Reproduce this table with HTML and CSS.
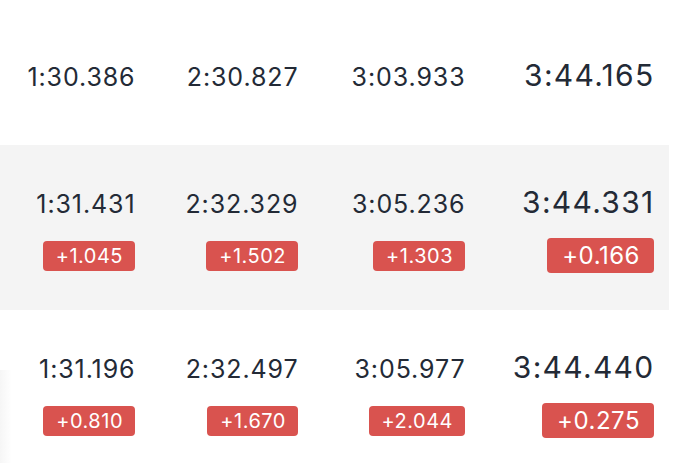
FILE: index.html
```html
<!DOCTYPE html>
<html>
<head>
<meta charset="utf-8">
<link rel="stylesheet" href="styles.css">
</head>
<body>
<div class="table">
  <div class="row row-first">
    <div class="time">1:30.386</div>
    <div class="time">2:30.827</div>
    <div class="time">3:03.933</div>
    <div class="time total">3:44.165</div>
  </div>
  <div class="row row-alt">
    <div class="time">1:31.431</div>
    <div class="time">2:32.329</div>
    <div class="time">3:05.236</div>
    <div class="time total">3:44.331</div>
    <div class="gap">+1.045</div>
    <div class="gap">+1.502</div>
    <div class="gap">+1.303</div>
    <div class="gap gap-total">+0.166</div>
  </div>
  <div class="row row-last">
    <div class="time">1:31.196</div>
    <div class="time">2:32.497</div>
    <div class="time">3:05.977</div>
    <div class="time total">3:44.440</div>
    <div class="gap">+0.810</div>
    <div class="gap">+1.670</div>
    <div class="gap">+2.044</div>
    <div class="gap gap-total">+0.275</div>
  </div>
</div>
</body>
</html>
```
FILE: styles.css
```css
html, body {
  margin: 0;
  padding: 0;
  background: #ffffff;
  overflow: hidden;
}
body {
  width: 688px;
  height: 463px;
  font-family: Inter, "Noto Sans", sans-serif;
  color: #232a36;
}
.table {
  width: 669px;
}
.row {
  display: grid;
  grid-template-columns: 134px 163px 167px 189px;
  grid-auto-rows: auto;
  align-content: start;
  justify-items: end;
  align-items: baseline;
  row-gap: 16px;
  padding-right: 16px;
  box-sizing: border-box;
}
.row-first {
  height: 145px;
  padding-top: 57px;
}
.row-alt {
  height: 165px;
  padding-top: 39px;
  background: #f4f4f4;
}
.row-last {
  height: 165px;
  padding-top: 39px;
  background: linear-gradient(to right, rgba(0,0,0,0.035), rgba(0,0,0,0) 12px) no-repeat 0 60px / 12px 105px;
}
.time {
  font-size: 25px;
  line-height: 36px;
  letter-spacing: 0.9px;
  font-weight: 400;
  margin-right: -1.5px;
}
.time.total {
  font-size: 30px;
  letter-spacing: 1.3px;
  font-weight: 400;
  margin-right: -1.5px;
}
.gap {
  align-self: center;
  background: #d9534f;
  color: #ffffff;
  font-size: 20px;
  line-height: 30px;
  height: 30px;
  padding: 0 12px 0 13px;
  margin-right: -1px;
  border-radius: 4px;
  letter-spacing: 0.5px;
}
.gap-total {
  font-size: 24px;
  line-height: 35px;
  height: 35px;
  padding: 0 14px 0 15px;
}
```
